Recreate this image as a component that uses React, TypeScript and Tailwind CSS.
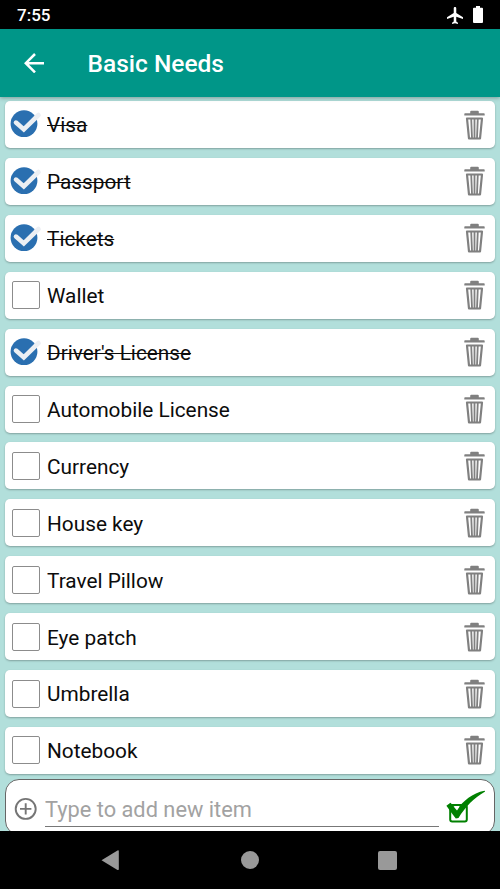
import { ChangeEvent, useState } from "react"

interface Item {
    id: number;
    name: string;
    done: boolean;
}

const initialItems: Item[] = [
    { id: 1, name: "Visa", done: true },
    { id: 2, name: "Passport", done: true },
    { id: 3, name: "Tickets", done: true },
    { id: 4, name: "Wallet", done: false },
    { id: 5, name: "Driver's License", done: true },
    { id: 6, name: "Automobile License", done: false },
    { id: 7, name: "Currency", done: false },
    { id: 8, name: "House key", done: false },
    { id: 9, name: "Travel Pillow", done: false },
    { id: 10, name: "Eye patch", done: false },
    { id: 11, name: "Umbrella", done: false },
    { id: 12, name: "Notebook", done: false },
]

const CheckedIcon = () => (
    <svg width="36" height="30" viewBox="0 0 36 30">
        <circle cx="14" cy="14.7" r="13.4" fill="#2a6fb0" />
        <path d="M6 13.6 L13.8 20.4 L28.5 6" fill="none" stroke="#eceff3" strokeWidth="4.6" strokeLinecap="round" />
    </svg>
)

const TrashIcon = () => (
    <svg width="21" height="30" viewBox="0 0 21 30" fill="#808080">
        <path d="M6.2 3.2 V1.7 Q6.2 .7 7.2 .7 H13.8 Q14.8 .7 14.8 1.700 V3.200 H20 Q20.700 3.200 20.700 4.200 V5.400 H.3 V4.200 Q.3 3.200 1 3.200 Z" />
        <path d="M3 8.5 H18 L16 28.500 H5 Z" fill="none" stroke="#808080" strokeWidth="2.2" strokeLinejoin="round" />
        <path d="M7.2 8.5 L8 28 M10.5 8.5 V28 M13.8 8.5 L13 28" fill="none" stroke="#808080" strokeWidth="1.8" />
    </svg>
)

const ConfirmIcon = () => (
    <svg width="42" height="36" viewBox="0 0 42 36">
        <rect x="4.2" y="15" width="16.6" height="16.4" rx="2" fill="none" stroke="#008000" strokeWidth="2" />
        <path d="M.4 15.8 L4.4 12.8 Q8.2 16.500 11.200 19.500 C17 11 26.500 3 38.500 .8 Q40 1.200 38 2.200 C28.500 7.500 19.500 16.500 12.500 28 L9.800 28.500 Q5 22.500 .4 15.800 Z" fill="#008000" />
        <path d="M7.600 16.600 H13.600 L11 20.600 Z" fill="#fff" />
    </svg>
)

const StatusBar = () => (
    <div className="flex h-[29px] shrink-0 items-center bg-black pr-[17px] pl-[17px] text-white">
        <span className="pt-px text-[17px] leading-5 font-medium">7:55</span>
        <svg className="mt-px ml-auto" width="16" height="17" viewBox="2 2 19 20" preserveAspectRatio="none" fill="currentColor">
            <path d="M21 16v-2l-8-5V3.500c0-.83-.67-1.500-1.500-1.500S10 2.670 10 3.500V9l-8 5v2l8-2.500V19l-2 1.500V22l3.500-1 3.500 1v-1.500L13 19v-5.500l8 2.500z" />
        </svg>
        <svg className="ml-[10px]" width="10" height="17" viewBox="0 0 10 17" fill="currentColor">
            <path d="M3 0h4v1.800h2q1 0 1 1V16q0 1-1 1H1q-1 0-1-1V2.800q0-1 1-1h2z" />
        </svg>
    </div>
)

const App = () => {
    const [items, setItems] = useState<Item[]>(initialItems)
    const [text, setText] = useState("")

    const toggle = (id: number) => {
        setItems(items.map((item) => item.id === id ? { ...item, done: !item.done } : item))
    }

    const remove = (id: number) => {
        setItems(items.filter((item) => item.id !== id))
    }

    const add = () => {
        if (!text.trim()) return
        setItems([...items, { id: Date.now(), name: text, done: false }])
        setText("")
    }

    const itemElements = items.map((item) => (
        <li key={item.id} className="flex h-[47px] shrink-0 items-center rounded-[5px] bg-white pr-[10px] pl-[5px] shadow-[0_1px_2px_rgba(0,0,0,0.28)]">
            <button type="button" aria-label={item.name} onClick={() => toggle(item.id)} className="flex h-[30px] w-[37px] shrink-0 items-center">
                {item.done
                    ? <span className="-mt-px ml-[0.4px]"><CheckedIcon /></span>
                    : <span className="ml-[1.600px] size-7 rounded-[2px] border border-[#8c8c8c]" />}
            </button>
            <span className={item.done ? "pt-[3px] line-through decoration-[1.300px]" : "pt-[3px]"}>{item.name}</span>
            <button type="button" aria-label="Delete" onClick={() => remove(item.id)} className="ml-auto">
                <TrashIcon />
            </button>
        </li>
    ))

    return (
        <div className="flex h-[889px] w-[500px] flex-col overflow-hidden bg-[#b2dfdb] font-[Roboto,sans-serif]">
            <StatusBar />
            <header className="z-10 flex h-[68px] shrink-0 items-center bg-[#009688] pl-[24px] text-white shadow-[0_1px_4px_rgba(0,0,0,0.3)]">
                <svg width="20" height="20" viewBox="0 0 20 20" fill="none" stroke="currentColor" strokeWidth="2.5">
                    <path d="M20 10.200H2M11 1L1.800 10.200l9.200 9.200" />
                </svg>
                <h1 className="ml-[43.500px] pt-[3px] text-[24.500px] font-medium">Basic Needs</h1>
            </header>
            <main className="flex min-h-0 flex-1 flex-col overflow-hidden">
                <ul className="flex shrink-0 flex-col gap-[9.920px] px-[5px] pt-[4px] text-[20.800px] text-[#0c0c0c]">
                    {itemElements}
                </ul>
                <div className="mx-[5px] mt-[5.300px] flex h-[56px] shrink-0 rounded-[14px] border border-[#666] bg-white pl-[8px]">
                    <svg className="mt-[17px] shrink-0" width="24" height="24" viewBox="0 0 24 24" fill="none" stroke="#757575" strokeWidth="1.900">
                        <circle cx="11.700" cy="11.900" r="10" />
                        <path d="M6 11.900h11.400M11.700 6.200v11.400" />
                    </svg>
                    <input
                        value={text}
                        onChange={(event: ChangeEvent<HTMLInputElement>) => setText(event.target.value)}
                        placeholder="Type to add new item"
                        className="ml-[7px] h-[47px] w-[394px] border-b border-[#777] pt-[13px] text-[21.800px] outline-none placeholder:text-[#a2a2a2]"
                    />
                    <button type="button" aria-label="Add item" onClick={add} className="mt-[10px] ml-[7px] h-[36px] shrink-0">
                        <ConfirmIcon />
                    </button>
                </div>
            </main>
            <nav className="flex h-[58px] shrink-0 items-center bg-black pl-[101px] text-[#999]">
                <svg width="18" height="21" viewBox="0 0 18 21" fill="currentColor">
                    <path d="M.5 10.200L16.500.5q1.300-.5 1.300.6v18.200q0 1.100-1.300.6z" />
                </svg>
                <span className="ml-[121.600px] size-[18px] rounded-full bg-[#999]" />
                <span className="ml-[119.200px] size-[19px] rounded-[2px] bg-[#999]" />
            </nav>
        </div>
    )
}

export default App
